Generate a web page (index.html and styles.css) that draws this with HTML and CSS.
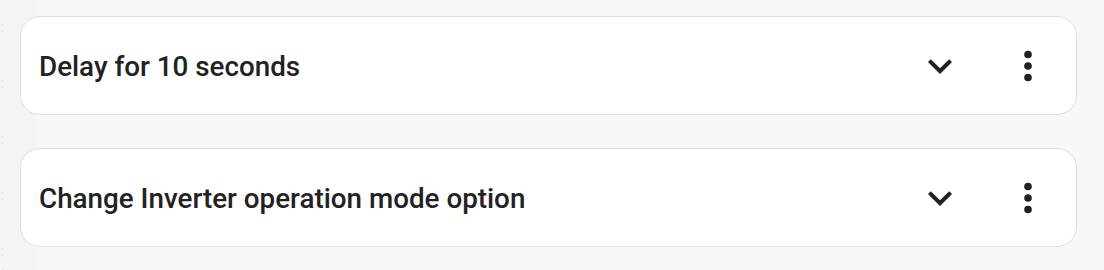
FILE: index.html
```html
<!DOCTYPE html>
<html>
<head>
<meta charset="utf-8">
<link rel="stylesheet" href="styles.css">
</head>
<body>
<div class="list">
  <div class="card">
    <div class="title">Delay for 10 seconds</div>
    <div class="actions">
      <span class="icon-btn chevron">
        <svg viewBox="0 0 24 24" width="48" height="48"><path d="M7.41,8.58L12,13.17L16.59,8.58L18,10L12,16L6,10L7.41,8.58Z"/></svg>
      </span>
      <span class="icon-btn dots">
        <svg viewBox="0 0 24 24" width="46" height="46"><path d="M12,16A2,2 0 0,1 14,18A2,2 0 0,1 12,20A2,2 0 0,1 10,18A2,2 0 0,1 12,16M12,10A2,2 0 0,1 14,12A2,2 0 0,1 12,14A2,2 0 0,1 10,12A2,2 0 0,1 12,10M12,4A2,2 0 0,1 14,6A2,2 0 0,1 12,8A2,2 0 0,1 10,6A2,2 0 0,1 12,4Z"/></svg>
      </span>
    </div>
  </div>
  <div class="card">
    <div class="title">Change Inverter operation mode option</div>
    <div class="actions">
      <span class="icon-btn chevron">
        <svg viewBox="0 0 24 24" width="48" height="48"><path d="M7.41,8.58L12,13.17L16.59,8.58L18,10L12,16L6,10L7.41,8.58Z"/></svg>
      </span>
      <span class="icon-btn dots">
        <svg viewBox="0 0 24 24" width="46" height="46"><path d="M12,16A2,2 0 0,1 14,18A2,2 0 0,1 12,20A2,2 0 0,1 10,18A2,2 0 0,1 12,16M12,10A2,2 0 0,1 14,12A2,2 0 0,1 12,14A2,2 0 0,1 10,12A2,2 0 0,1 12,10M12,4A2,2 0 0,1 14,6A2,2 0 0,1 12,8A2,2 0 0,1 10,6A2,2 0 0,1 12,4Z"/></svg>
      </span>
    </div>
  </div>
</div>
</body>
</html>
```

FILE: styles.css
```css
html, body {
  margin: 0;
  padding: 0;
}
body {
  width: 1104px;
  height: 270px;
  overflow: hidden;
  font-family: Roboto, "Noto Sans", sans-serif;
  color: #222222;
  background:
    radial-gradient(circle, #e2e2e2 0.5px, transparent 0.9px) 1px 0 / 3px 7px repeat-y,
    linear-gradient(to right, #f4f4f4 0, #f4f4f4 36px, #f7f7f7 36px);
}
.list {
  display: flex;
  flex-direction: column;
  gap: 33px;
  padding: 16px 27px 0 20px;
}
.card {
  box-sizing: border-box;
  height: 99px;
  background: #ffffff;
  border: 1px solid #e0e0e0;
  border-radius: 20px;
  display: flex;
  align-items: center;
  padding: 2px 24px 0 18px;
}
.title {
  flex: 1;
  font-size: 27.8px;
  font-weight: 500;
  line-height: 1.2;
}
.actions {
  display: flex;
  align-items: center;
  gap: 40px;
  margin-top: -2px;
}
.icon-btn {
  width: 48px;
  height: 48px;
  display: flex;
  align-items: center;
  justify-content: center;
}
.icon-btn svg {
  fill: #212121;
  display: block;
}
```
